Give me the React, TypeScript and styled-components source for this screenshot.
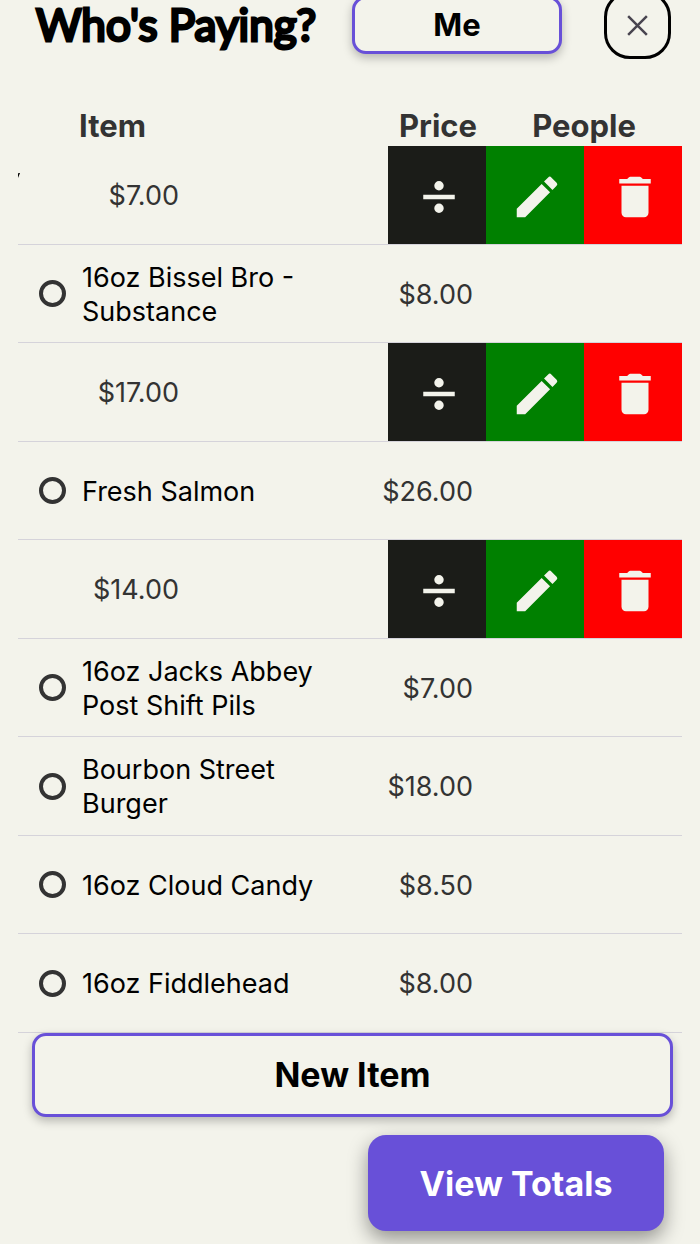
import React from "react";
import styled, { createGlobalStyle } from "styled-components";

const GlobalStyle = createGlobalStyle`
  *, *::before, *::after { box-sizing: border-box; }
  body {
    margin: 0;
    background: #f3f3eb;
    color: #000;
    font-family: Inter, "Liberation Sans", sans-serif;
  }
  button { font-family: inherit; cursor: pointer; }
`;

const Page = styled.main`
  min-height: 100vh;
  padding-bottom: 13px;
  background: #f3f3eb;
`;

const Header = styled.header`
  display: flex;
  align-items: center;
  height: 68px;
  margin-top: -9px;
  padding: 0 29px 0 36px;
`;

const Title = styled.h1`
  flex: 1;
  margin: 0;
  padding-bottom: 2px;
  font-family: Lato, sans-serif;
  font-size: 44px;
  line-height: 44px;
  font-weight: 400;
  white-space: nowrap;
  -webkit-text-stroke: 3px #000;
  stroke-linejoin: round;
`;

const OutlineButton = styled.button<{ $size: "small" | "large" }>`
  height: ${(p) => (p.$size === "large" ? 84 : 58)}px;
  width: ${(p) => (p.$size === "large" ? "auto" : "210px")};
  margin: ${(p) => (p.$size === "large" ? "0 27px 0 32px" : "0")};
  padding: 0 0 2px;
  border: 3px solid #6850d8;
  border-radius: 14px;
  background: #f3f3eb;
  color: #000;
  font-size: ${(p) => (p.$size === "large" ? 34 : 31)}px;
  font-weight: 700;
  box-shadow: 0 4px 10px rgba(0, 0, 0, 0.25);
`;

const CloseButton = styled.button`
  display: grid;
  place-items: center;
  width: 67px;
  height: 68px;
  margin-left: 42px;
  padding: 0;
  border: 3px solid #000;
  border-radius: 26px;
  background: transparent;
  color: #48444f;
`;

const Table = styled.table`
  display: block;
  margin: 47px 18px 0;
`;

const Head = styled.thead`
  display: block;
`;

const Body = styled.tbody`
  display: block;
`;

const HeadRow = styled.tr`
  display: grid;
  grid-template-columns: 61px 1fr 114px 196px;
  height: 40px;
  align-items: center;
`;

const HeadCell = styled.th<{ $align?: "left" | "right" | "center" }>`
  padding: ${(p) => (p.$align === "right" ? "0 9px 0 0" : "0")};
  color: #333;
  font-size: 31px;
  line-height: 40px;
  font-weight: 700;
  text-align: ${(p) => p.$align ?? "left"};
`;

const Row = styled.tr<{ $open: boolean }>`
  display: grid;
  grid-template-columns: ${(p) =>
    p.$open ? "64px 97px 1fr" : "64px 1fr 114px 196px"};
  align-items: center;
  height: 98px;
  border-bottom: 1px solid #d5d3da;
  &:nth-child(odd) { height: 99px; }
`;

const Cell = styled.td`
  padding: 0;
`;

const EdgeCell = styled.td`
  align-self: start;
  padding: 27px 0 0;
  line-height: 0;
`;

const NameCell = styled.td`
  padding: 2px 32px 0 0;
  font-size: 27px;
  line-height: 34px;
  label { display: block; }
`;

const PriceCell = styled.td<{ $open: boolean }>`
  padding: 2px ${(p) => (p.$open ? 0 : 13)}px 0 0;
  color: #333;
  font-size: 27px;
  line-height: 34px;
  text-align: right;
`;

const Tick = styled.input`
  appearance: none;
  display: block;
  width: 27px;
  height: 27px;
  margin: 0 0 0 21px;
  border: 4px solid #333;
  border-radius: 50%;
  background: transparent;
  &:checked { background: #333; }
`;

const Actions = styled.td`
  display: flex;
  justify-content: flex-end;
  padding: 0;
`;

const ActionButton = styled.button<{ $color: string }>`
  display: flex;
  align-items: center;
  justify-content: center;
  width: 98px;
  height: 98px;
  padding: 4px 0 0 4px;
  border: 0;
  background: ${(p) => p.$color};
  color: #f3f3eb;
  svg { display: block; width: 54px; height: 54px; fill: currentColor; }
`;

const Footer = styled.footer`
  display: flex;
  justify-content: flex-end;
  margin-top: 18px;
  padding: 0 36px;
`;

const TotalsButton = styled.button`
  width: 296px;
  height: 96px;
  padding: 0;
  border: 0;
  border-radius: 18px;
  background: #6850d8;
  color: #fff;
  font-size: 34px;
  font-weight: 700;
  box-shadow: 0 8px 20px rgba(0, 0, 0, 0.4);
`;

const ListEnd = styled.div`
  display: flex;
  flex-direction: column;
`;

type Item = { name?: string; price: string; edge?: boolean };

const items: Item[] = [
  { price: "$7.00", edge: true },
  { name: "16oz Bissel Bro - Substance", price: "$8.00" },
  { price: "$17.00" },
  { name: "Fresh Salmon", price: "$26.00" },
  { price: "$14.00" },
  { name: "16oz Jacks Abbey Post Shift Pils", price: "$7.00" },
  { name: "Bourbon Street Burger", price: "$18.00" },
  { name: "16oz Cloud Candy", price: "$8.50" },
  { name: "16oz Fiddlehead", price: "$8.00" },
];

const actions = [
  {
    label: "Split",
    color: "#1b1c18",
    path: "M19 13H5v-2h14v2M12 4.9a2.1 2.1 0 1 1 0 4.2a2.1 2.1 0 0 1 0-4.2m0 10a2.1 2.1 0 1 1 0 4.2a2.1 2.1 0 0 1 0-4.2z",
  },
  {
    label: "Edit",
    color: "#008000",
    path: "M3 17.25V21h3.75L17.81 9.94l-3.75-3.75L3 17.25zM20.71 7.04a1 1 0 0 0 0-1.41l-2.34-2.34a1 1 0 0 0-1.41 0l-1.83 1.83 3.75 3.75 1.83-1.83z",
  },
  {
    label: "Delete",
    color: "#ff0000",
    path: "M6 19c0 1.1.9 2 2 2h8c1.1 0 2-.9 2-2V7H6v12zM19 4h-3.5l-.71-.71c-.18-.18-.44-.29-.7-.29H9.91c-.26 0-.52.11-.7.29L8.5 4H5v2h14V4z",
  },
];

function ItemRow({ item, id }: { item: Item; id: string }) {
  if (!item.name) {
    return (
      <Row $open>
        {item.edge ? (
          <EdgeCell>
            <svg width="3" height="6" viewBox="0 0 3 6" aria-hidden="true">
              <path d="M0 1.2L.4 0H2L0 5z" />
            </svg>
          </EdgeCell>
        ) : (
          <Cell />
        )}
        <PriceCell $open>{item.price}</PriceCell>
        <Actions>
          {actions.map((a) => (
            <ActionButton key={a.label} type="button" aria-label={a.label} $color={a.color}>
              <svg viewBox="0 0 24 24" aria-hidden="true">
                <path d={a.path} />
              </svg>
            </ActionButton>
          ))}
        </Actions>
      </Row>
    );
  }
  return (
    <Row $open={false}>
      <Cell>
        <Tick type="checkbox" id={id} />
      </Cell>
      <NameCell>
        <label htmlFor={id}>{item.name}</label>
      </NameCell>
      <PriceCell $open={false}>{item.price}</PriceCell>
      <Cell />
    </Row>
  );
}

export default function App() {
  return (
    <Page>
      <GlobalStyle />
      <Header>
        <Title>Who's Paying?</Title>
        <OutlineButton type="button" $size="small">Me</OutlineButton>
        <CloseButton type="button" aria-label="Close">
          <svg width="21" height="21" viewBox="0 0 22 22" fill="none" stroke="currentColor" strokeWidth="2.6" aria-hidden="true">
            <path d="M1.2 1.2l19.6 19.6M20.8 1.2l-19.6 19.6" />
          </svg>
        </CloseButton>
      </Header>
      <Table>
        <Head>
          <HeadRow>
            <Cell />
            <HeadCell scope="col">Item</HeadCell>
            <HeadCell scope="col" $align="right">Price</HeadCell>
            <HeadCell scope="col" $align="center">People</HeadCell>
          </HeadRow>
        </Head>
        <Body>
          {items.map((item, i) => (
            <ItemRow key={i} item={item} id={`item-${i}`} />
          ))}
        </Body>
      </Table>
      <ListEnd>
        <OutlineButton type="button" $size="large">New Item</OutlineButton>
      </ListEnd>
      <Footer>
        <TotalsButton type="button">View Totals</TotalsButton>
      </Footer>
    </Page>
  );
}
